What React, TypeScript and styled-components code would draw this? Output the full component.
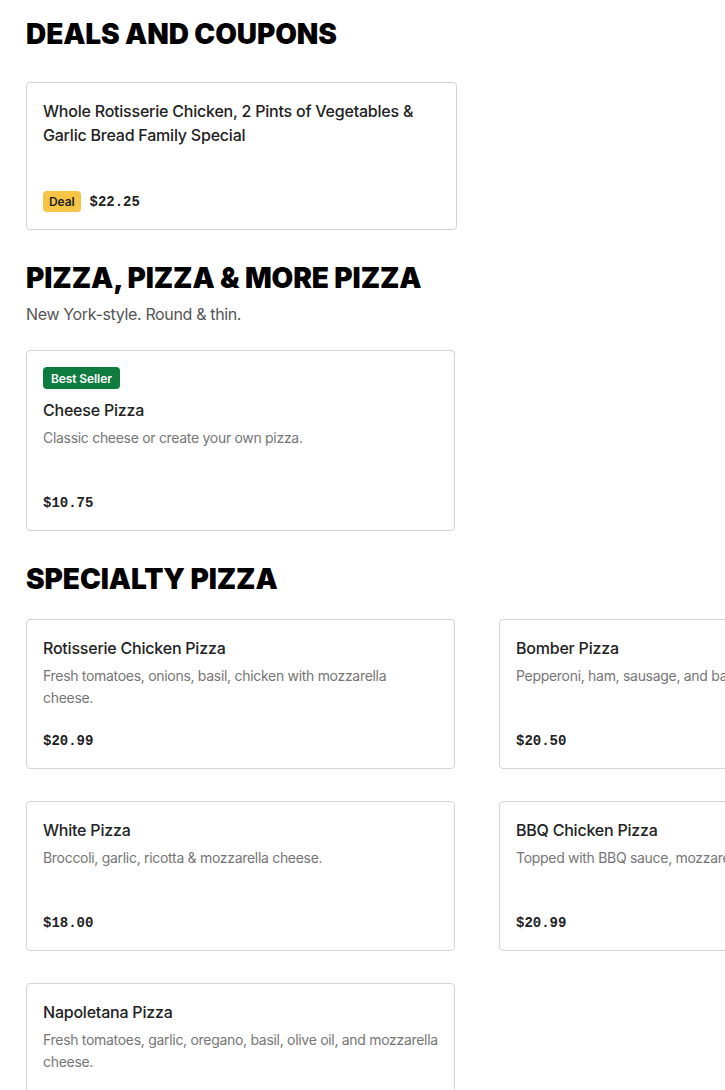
import React from 'react';
import styled, { createGlobalStyle } from 'styled-components';

type Item = {
  name: string;
  description?: string;
  price: string;
  badge?: 'deal' | 'best';
};

const deals: Item[] = [
  {
    name: 'Whole Rotisserie Chicken, 2 Pints of Vegetables & Garlic Bread Family Special',
    price: '$22.25',
    badge: 'deal',
  },
];

const pizzas: Item[] = [
  {
    name: 'Cheese Pizza',
    description: 'Classic cheese or create your own pizza.',
    price: '$10.75',
    badge: 'best',
  },
];

const specialty: Item[] = [
  {
    name: 'Rotisserie Chicken Pizza',
    description: 'Fresh tomatoes, onions, basil, chicken with mozzarella cheese.',
    price: '$20.99',
  },
  {
    name: 'Bomber Pizza',
    description: 'Pepperoni, ham, sausage, and bacon with mozzarella.',
    price: '$20.50',
  },
  {
    name: 'White Pizza',
    description: 'Broccoli, garlic, ricotta & mozzarella cheese.',
    price: '$18.00',
  },
  {
    name: 'BBQ Chicken Pizza',
    description: 'Topped with BBQ sauce, mozzarella cheese and chicken.',
    price: '$20.99',
  },
  {
    name: 'Napoletana Pizza',
    description: 'Fresh tomatoes, garlic, oregano, basil, olive oil, and mozzarella cheese.',
    price: '$19.99',
  },
];

const MenuCard: React.FC<{ item: Item }> = ({ item }) => {
  if (item.badge === 'deal') {
    return (
      <Card>
        <ItemName>{item.name}</ItemName>
        <DealFooter>
          <Badge $variant="deal">Deal</Badge>
          <Price>{item.price}</Price>
        </DealFooter>
      </Card>
    );
  }

  return (
    <Card>
      {item.badge === 'best' && (
        <BadgeRow>
          <Badge $variant="best">Best Seller</Badge>
        </BadgeRow>
      )}
      <ItemName>{item.name}</ItemName>
      <Description>{item.description}</Description>
      <Footer>
        <Price>{item.price}</Price>
      </Footer>
    </Card>
  );
};

const App: React.FC = () => (
  <Page>
    <GlobalStyle />

    <Section>
      <Heading $gap={31}>Deals and Coupons</Heading>
      <Grid $col={431}>
        {deals.map((d) => (
          <MenuCard key={d.name} item={d} />
        ))}
      </Grid>
    </Section>

    <Section>
      <Heading $gap={7}>Pizza, Pizza &amp; More Pizza</Heading>
      <Subtitle>New York-style. Round &amp; thin.</Subtitle>
      <Grid $col={429}>
        {pizzas.map((p) => (
          <MenuCard key={p.name} item={p} />
        ))}
      </Grid>
    </Section>

    <Section>
      <Heading $gap={23}>Specialty Pizza</Heading>
      <Grid $col={429}>
        {specialty.map((p) => (
          <MenuCard key={p.name} item={p} />
        ))}
      </Grid>
    </Section>
  </Page>
);

const GlobalStyle = createGlobalStyle`
  html, body {
    margin: 0;
    padding: 0;
    background: #fff;
    overflow-x: hidden;
  }
  body {
    font-family: Inter, "Noto Sans", "Liberation Sans", sans-serif;
    color: #222;
  }
`;

const Page = styled.div`
  padding: 17px 26px 40px;
  width: 960px;
`;

const Section = styled.section`
  margin-bottom: 31px;
`;

const Heading = styled.h2<{ $gap: number }>`
  margin: 0 0 ${({ $gap }) => $gap}px;
  font-family: Inter, "DejaVu Sans", sans-serif;
  font-weight: 900;
  font-size: 28px;
  line-height: 34px;
  letter-spacing: -0.1px;
  text-transform: uppercase;
  color: #000;
`;

const Subtitle = styled.p`
  margin: 0 0 24px;
  font-size: 16px;
  line-height: 24px;
  letter-spacing: -0.35px;
  color: #555;
`;

const Grid = styled.div<{ $col: number }>`
  display: grid;
  grid-template-columns: ${({ $col }) => `${$col}px ${$col}px`};
  column-gap: 44px;
  row-gap: 32px;
`;

const Card = styled.div`
  display: flex;
  flex-direction: column;
  box-sizing: border-box;
  padding: 16px 16px 17px;
  border: 1px solid #d4d4d4;
  border-radius: 4px;
  background: #fff;
`;

const BadgeRow = styled.div`
  display: flex;
  margin-bottom: 9px;
`;

const Badge = styled.span<{ $variant: 'deal' | 'best' }>`
  display: inline-flex;
  align-items: center;
  height: ${({ $variant }) => ($variant === 'deal' ? '21px' : '22px')};
  padding: ${({ $variant }) => ($variant === 'deal' ? '0 6px' : '0 8px')};
  border-radius: 4px;
  font-size: 12px;
  font-weight: 600;
  letter-spacing: -0.1px;
  background: ${({ $variant }) => ($variant === 'deal' ? '#f7c545' : '#0f7c3f')};
  color: ${({ $variant }) => ($variant === 'deal' ? '#222' : '#fff')};
`;

const ItemName = styled.h3`
  margin: 0;
  font-size: 16px;
  line-height: 24px;
  font-weight: 500;
  letter-spacing: -0.22px;
  color: #222;
`;

const Description = styled.p`
  margin: 5px 0 0;
  min-height: 44px;
  font-size: 14px;
  line-height: 22px;
  letter-spacing: -0.3px;
  color: #767676;
`;

const Footer = styled.div`
  margin-top: auto;
  padding-top: 22px;
  display: flex;
  align-items: center;
`;

const DealFooter = styled.div`
  margin-top: 44px;
  display: flex;
  align-items: center;
  gap: 9px;
`;

const Price = styled.span`
  font-family: "Liberation Mono", "DejaVu Sans Mono", monospace;
  font-weight: 700;
  font-size: 14px;
  line-height: 20px;
  color: #222;
`;

export default App;
